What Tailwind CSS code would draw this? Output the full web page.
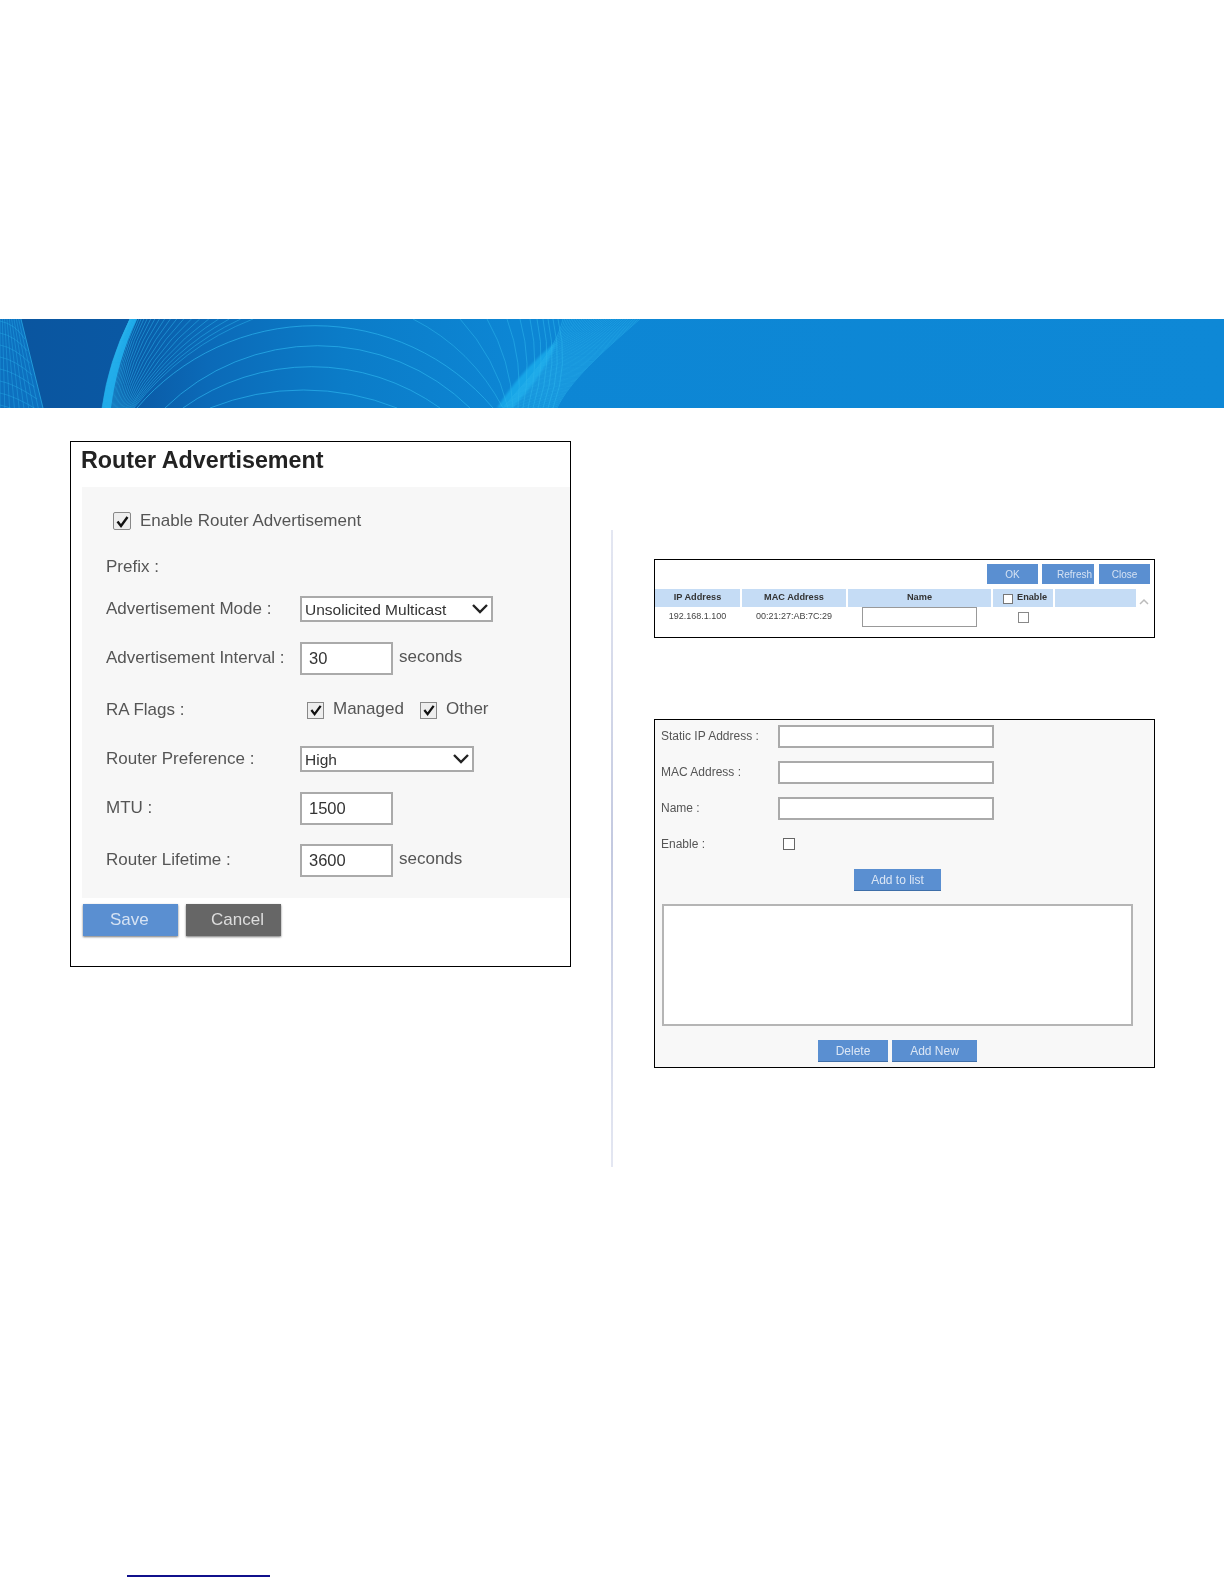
<!DOCTYPE html>
<html lang="en">

<head>
    <meta charset="UTF-8">
    <title>Router Advertisement</title>
    <script src="https://cdn.jsdelivr.net/npm/@tailwindcss/browser@4"></script>
</head>

<body class="bg-white font-['Liberation_Sans',Arial,sans-serif] text-[#555]">
    <div class="w-[1224px] h-[1584px] overflow-hidden flex flex-col">
        <!-- banner -->
        <svg id="banner" class="block mt-[319px] shrink-0" width="1224" height="89" viewBox="0 0 1224 89">
            <defs>
                <linearGradient id="bg" x1="0" x2="1" y1="0" y2="0">
                    <stop offset="0" stop-color="#0a559f" />
                    <stop offset="0.1" stop-color="#0a58a3" />
                    <stop offset="0.17" stop-color="#0b6ab8" />
                    <stop offset="0.28" stop-color="#0b7cc8" />
                    <stop offset="0.42" stop-color="#0d86d4" />
                    <stop offset="1" stop-color="#0e88d6" />
                </linearGradient>
            </defs>
            <rect width="1224" height="89" fill="url(#bg)" />
            <path d="M0 0H21L43 89H0Z" fill="#0d70bf" />
            <path d="M130 0H137Q117 42 111 89H102Q108.6 42 130 0Z" fill="#19a6e8" />
            <path d="M557 22Q548 50 513 89H497Q520 52 557 22Z" fill="#1bb0ee" opacity="0.75" class="blur-[1px]" />
            <g id="lines" fill="none" stroke="#2bb3ec" stroke-width="0.7"></g>
        </svg>

        <main class="flex items-start">
            <!-- left panel -->
            <section class="ml-[70px] mt-[33px] w-[501px] h-[526px] border border-black shrink-0 blur-[0.5px]">
                <h1 class="h-[45px] pl-[10px] pt-[3px] text-[23.3px] leading-[30px] font-bold text-[#222]">Router Advertisement</h1>
                <div class="ml-[11px] h-[411px] bg-[#f7f7f7] pt-[17px] pl-[24px] text-[17px]">
                    <div class="h-[34px] flex items-center pl-[7px]">
                        <span class="w-[18px] h-[18px] border border-[#888] rounded-[2px] bg-[#eee] flex items-center justify-center">
                            <svg width="15" height="15" viewBox="0 0 15 15" fill="none" stroke="#111" stroke-width="2.4"><path d="M2.5 7.5L6 12L12.5 3" /></svg>
                        </span>
                        <span class="ml-[9px]">Enable Router Advertisement</span>
                    </div>
                    <div class="h-[34px] mt-[12px] flex items-center">Prefix :</div>
                    <div class="h-[34px] mt-[8px] flex items-center">
                        <span class="w-[194px]">Advertisement Mode :</span>
                        <div class="relative">
                            <select class="appearance-none block w-[193px] h-[26px] border-2 border-[#aaa] bg-white pl-[3px] pb-[2px] text-[#333] text-[15.5px]">
                                <option>Unsolicited Multicast</option>
                            </select>
                            <svg class="absolute right-[4px] top-[5px]" width="18" height="16" viewBox="0 0 18 16" fill="none" stroke="#222" stroke-width="2.4"><path d="M2 4L9 11L16 4" /></svg>
                        </div>
                    </div>
                    <div class="h-[34px] mt-[15px] flex items-center">
                        <span class="w-[194px]">Advertisement Interval :</span>
                        <input class="w-[93px] h-[33px] border-2 border-[#aaa] bg-white pl-[7px] text-[#333] text-[16.5px]" value="30">
                        <span class="ml-[6px] -mt-[2px]">seconds</span>
                    </div>
                    <div class="h-[34px] mt-[18px] flex items-center">
                        <span class="w-[201px]">RA Flags :</span>
                        <span class="w-[17px] h-[17px] border border-[#888] bg-[#eee] flex items-center justify-center">
                            <svg width="14" height="14" viewBox="0 0 15 15" fill="none" stroke="#111" stroke-width="2.4"><path d="M2.5 7.5L6 12L12.5 3" /></svg>
                        </span>
                        <span class="ml-[9px] w-[87px] -mt-[2px]">Managed</span>
                        <span class="w-[17px] h-[17px] border border-[#888] bg-[#eee] flex items-center justify-center">
                            <svg width="14" height="14" viewBox="0 0 15 15" fill="none" stroke="#111" stroke-width="2.4"><path d="M2.5 7.5L6 12L12.5 3" /></svg>
                        </span>
                        <span class="ml-[9px] -mt-[2px]">Other</span>
                    </div>
                    <div class="h-[34px] mt-[15px] flex items-center">
                        <span class="w-[194px]">Router Preference :</span>
                        <div class="relative">
                            <select class="appearance-none block w-[174px] h-[26px] border-2 border-[#aaa] bg-white pl-[3px] pb-[2px] text-[#333] text-[15.5px]">
                                <option>High</option>
                            </select>
                            <svg class="absolute right-[4px] top-[5px]" width="18" height="16" viewBox="0 0 18 16" fill="none" stroke="#222" stroke-width="2.4"><path d="M2 4L9 11L16 4" /></svg>
                        </div>
                    </div>
                    <div class="h-[34px] mt-[15px] flex items-center">
                        <span class="w-[194px]">MTU :</span>
                        <input class="w-[93px] h-[33px] border-2 border-[#aaa] bg-white pl-[7px] text-[#333] text-[16.5px]" value="1500">
                    </div>
                    <div class="h-[34px] mt-[18px] flex items-center">
                        <span class="w-[194px]">Router Lifetime :</span>
                        <input class="w-[93px] h-[33px] border-2 border-[#aaa] bg-white pl-[7px] text-[#333] text-[16.5px]" value="3600">
                        <span class="ml-[6px] -mt-[2px]">seconds</span>
                    </div>
                </div>
                <div class="flex gap-[8px] ml-[12px] mt-[6px] text-[17px]">
                    <button class="w-[95px] h-[32px] bg-[#5a8fd1] text-[#d5e2f3] text-left pl-[27px] shadow-[0_1px_2px_#777]">Save</button>
                    <button class="w-[95px] h-[32px] bg-[#666] text-[#ddd] text-left pl-[25px] shadow-[0_1px_2px_#777]">Cancel</button>
                </div>
            </section>

            <!-- column rule -->
            <div class="ml-[40px] mt-[122px] w-[2px] h-[637px] bg-gradient-to-b from-[#e4e7f2] via-[#c3c9e0] to-[#e4e7f2] shrink-0"></div>

            <!-- right column -->
            <div class="ml-[41px] mt-[151px] w-[501px] shrink-0 blur-[0.5px]">
                <section class="h-[79px] border border-black">
                    <div class="flex justify-end gap-[4px] pr-[4px] pt-[4px] h-[29px] text-[10px] text-[#d5e2f3]">
                        <button class="w-[51px] h-[20px] bg-[#5a8fd1]">OK</button>
                        <button class="w-[52px] h-[20px] bg-[#5a8fd1] text-right pr-[2px]">Refresh</button>
                        <button class="w-[51px] h-[20px] ml-[1px] bg-[#5a8fd1]">Close</button>
                    </div>
                    <div class="grid grid-cols-[85px_104px_143px_60px_81px_18px] gap-x-[2px] items-center h-[18px] text-[9.2px] font-bold text-[#333] text-center">
                        <div class="h-full bg-[#c5dcf5] flex items-center justify-center">IP Address</div>
                        <div class="h-full bg-[#c5dcf5] flex items-center justify-center">MAC Address</div>
                        <div class="h-full bg-[#c5dcf5] flex items-center justify-center">Name</div>
                        <div class="h-full bg-[#c5dcf5] flex items-center justify-start pl-[10px] gap-[4px]">
                            <span class="w-[10px] h-[10px] border border-[#777] bg-white mt-[2px]"></span><span class="-mt-[1px]">Enable</span>
                        </div>
                        <div class="h-full bg-[#c5dcf5]"></div>
                        <svg class="mt-[8px]" width="12" height="8" viewBox="0 0 12 8" fill="none" stroke="#bbb" stroke-width="1.5"><path d="M2 6L6 2L10 6" /></svg>
                    </div>
                    <div class="grid grid-cols-[85px_104px_143px_60px] gap-x-[2px] items-center h-[20px] text-[9px] text-[#444] text-center">
                        <div>192.168.1.100</div>
                        <div>00:21:27:AB:7C:29</div>
                        <div class="flex justify-center"><input class="w-[115px] h-[20px] border border-[#999] bg-white"></div>
                        <div class="flex justify-center"><span class="w-[11px] h-[11px] border border-[#888] bg-white"></span></div>
                    </div>
                </section>

                <section class="mt-[81px] h-[349px] border border-black bg-[#f8f8f8] text-[12px]">
                    <div class="flex items-center h-[23px] mt-[5px] pl-[6px]">
                        <span class="w-[117px] -mt-[2px]">Static IP Address :</span>
                        <input class="w-[216px] h-[23px] border-2 border-[#aaa] bg-white">
                    </div>
                    <div class="flex items-center h-[23px] mt-[13px] pl-[6px]">
                        <span class="w-[117px] -mt-[2px]">MAC Address :</span>
                        <input class="w-[216px] h-[23px] border-2 border-[#aaa] bg-white">
                    </div>
                    <div class="flex items-center h-[23px] mt-[13px] pl-[6px]">
                        <span class="w-[117px] -mt-[2px]">Name :</span>
                        <input class="w-[216px] h-[23px] border-2 border-[#aaa] bg-white">
                    </div>
                    <div class="flex items-center h-[23px] mt-[12px] pl-[6px]">
                        <span class="w-[122px]">Enable :</span>
                        <span class="w-[12px] h-[12px] border border-[#666] bg-white"></span>
                    </div>
                    <div class="flex justify-center mt-[14px] pr-[14px]">
                        <button class="w-[87px] h-[22px] bg-[#5a8fd1] text-[#dbe6f5] border-b border-[#3e6ea8]">Add to list</button>
                    </div>
                    <div class="ml-[7px] mt-[13px] w-[471px] h-[122px] border-2 border-[#b5b5b5] bg-white"></div>
                    <div class="flex justify-center gap-[4px] mt-[14px] pr-[14px]">
                        <button class="w-[70px] h-[22px] bg-[#5a8fd1] text-[#dbe6f5] border-b border-[#3e6ea8]">Delete</button>
                        <button class="w-[85px] h-[22px] bg-[#5a8fd1] text-[#dbe6f5] border-b border-[#3e6ea8]">Add New</button>
                    </div>
                </section>
            </div>
        </main>

        <!-- link underline at page foot -->
        <div class="ml-[127px] mt-[408px] w-[143px] h-[2px] bg-[#10108c] shrink-0"></div>
    </div>

    <script>
        // banner line work
        const g = document.getElementById('lines');
        const add = (d, op) => {
            const p = document.createElementNS('http://www.w3.org/2000/svg', 'path');
            p.setAttribute('d', d);
            p.setAttribute('opacity', op);
            g.appendChild(p);
        };

        // left grid fan
        for (let i = 0; i <= 9; i++) {
            const t = i / 9;
            add(`M${t * 21} 0L${t * 43} 89`, i === 9 ? 1 : 0.55);
        }
        for (let i = 0; i < 8; i++) {
            add(`M0 ${i * 12 + 2}Q15 ${i * 12 + 5} ${25 + i * 2.4} ${i * 12 + 20}`, 0.55);
        }

        // lines from the bright edge out over the top
        for (let i = 0; i < 30; i++) {
            const s = i / 29;
            add(`M${102 + 32 * s} 89A280 280 0 0 1 ${130 + 123 * s * s * s} 0`, 0.75);
        }

        // concentric arcs
        [[137, 493, 6.7], [165, 470, 26.7], [183, 440, 47.7], [210, 397, 71]].forEach(([a, b, y]) => {
            const w = b - a, h = 89 - y;
            const r = (w * w / 4 + h * h) / (2 * h);
            add(`M${a} 89A${r} ${r} 0 0 1 ${b} 89`, 1);
        });

        // arcs coming down on the right
        [413, 460, 487, 507, 520, 530, 537, 543, 548, 553, 558].forEach((x, i) => {
            add(`M${x} 0A${210 - i * 6} ${210 - i * 6} 0 0 1 ${503 + i * 5} 89`, 0.8);
        });

        // feathered fan off the swirl
        for (let i = 0; i < 46; i++) {
            const s = i / 45;
            add(`M${503 + 54 * s} 89C${525 + 45 * s} 62 ${555 + 45 * s} 35 ${563 + 77 * s} 0`, 0.7);
        }
    </script>
</body>

</html>
